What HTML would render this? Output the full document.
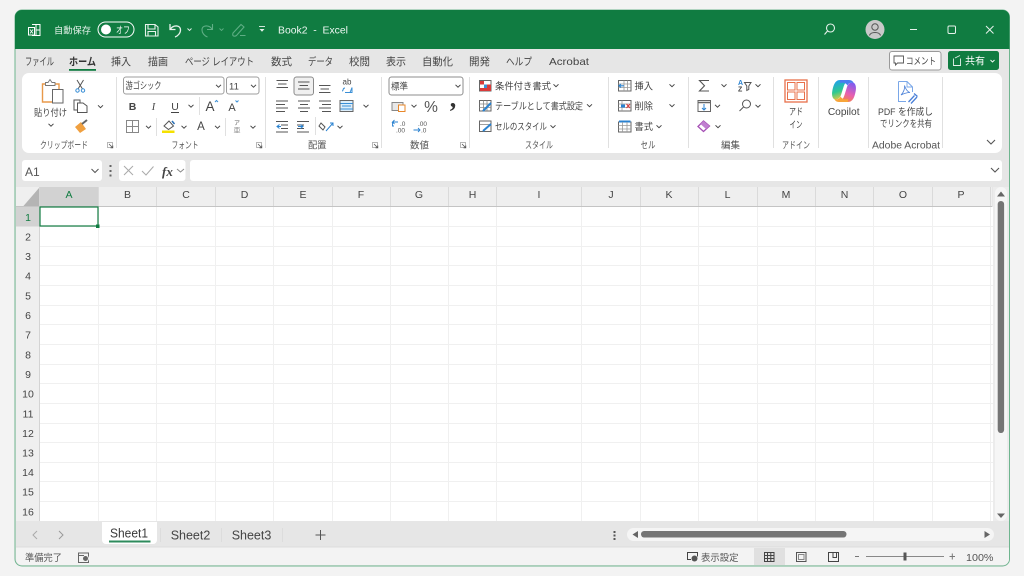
<!DOCTYPE html>
<html lang="ja"><head><meta charset="utf-8"><title>Book2 - Excel</title>
<style>
html,body{margin:0;padding:0;width:1024px;height:576px;overflow:hidden;background:#f3f3f3}
svg{display:block;position:absolute;left:0;top:0;filter:blur(.3px)}
text{font-family:"Liberation Sans","Noto Sans CJK JP",sans-serif;fill:#444;font-size:10px;white-space:pre}
.h{font-size:10.5px;fill:#444;text-anchor:middle}
.g{font-size:9.5px;fill:#555;text-anchor:middle}
.w{fill:#fff}
.t{font-size:10.5px}
.r{font-size:9.5px}
</style></head><body>
<svg width="1024" height="576" viewBox="0 0 1024 576">
<defs>
<linearGradient id="c1" x1="0.3" y1="0" x2="0.6" y2="1"><stop offset="0" stop-color="#1f9fee"/><stop offset=".55" stop-color="#2fc98f"/><stop offset="1" stop-color="#f7c93a"/></linearGradient>
<linearGradient id="c2" x1="0.7" y1="0" x2="0.3" y2="1"><stop offset="0" stop-color="#7f5cf0"/><stop offset=".55" stop-color="#e85fb0"/><stop offset="1" stop-color="#f58a3c"/></linearGradient>
<path id="cv" d="M-2.5 -1.2L0 1.2L2.5 -1.2" fill="none" stroke="#444" stroke-width="1"/>
<g id="ln"><rect x="-2.500" y="-2.500" width="5" height="5" fill="none" stroke="#999" stroke-width=".7"/><path d="M-1 -1L2.500 2.500M2.800 .5V2.800H.5" fill="none" stroke="#555" stroke-width=".8"/></g>
</defs>

<!-- window -->
<rect x="15" y="10" width="994.500" height="556" rx="7" fill="#e6e6e6" stroke="#6fb58f" stroke-width="1"/>
<path d="M15 49V17a7 7 0 0 1 7-7H1002.500a7 7 0 0 1 7 7V49Z" fill="#107c41"/>

<!-- title bar -->
<g fill="none" stroke="#fff" stroke-width="1">
<path d="M32 24.500H40V35.500H32M36 24.500V35.500M36 30H40" />
<rect x="28.500" y="27.500" width="6" height="7.500" fill="#107c41"/>
</g>
<path d="M30 29.500L33 33.500M33 29.500L30 33.500" stroke="#fff" stroke-width=".8"/>
<text x="54" y="33.500" style="font-size:9.300px;fill:#e6f2eb" textLength="37" lengthAdjust="spacingAndGlyphs">自動保存</text>
<rect x="98" y="22" width="36" height="15" rx="7.500" fill="none" stroke="#fff" stroke-width="1"/>
<circle cx="106" cy="29.500" r="5" fill="#fff"/>
<text x="116" y="33.500" style="font-size:9.500px;fill:#fff" textLength="14" lengthAdjust="spacingAndGlyphs">オフ</text>
<g fill="none" stroke="#e6f2eb" stroke-width="1.100">
<path d="M145.500 24.500H155L158 27V36H145.500ZM148 24.500V29H155V24.500M148 36V31.500H155.500V36"/>
<path d="M170 24V29.500H175.500M170.500 29C173 25 180.500 24.500 180.500 30C180.500 33 178 36 175 37" stroke-width="1.300"/>
<path d="M187.500 28.500L189.500 30.500L191.500 28.500" stroke-width=".9"/>
</g>
<g fill="none" stroke="#5fae85" stroke-width="1.100">
<path d="M212.500 24V29.500H207M212 29C209.500 25 202 24.500 202 30C202 33 204.500 36 207.500 37"/>
<path d="M219.500 28.500L221.500 30.500L223.500 28.500" stroke-width=".9"/>
<path d="M233 33L241 24.500L244 27L236.500 35.500C234 37 232 36 233 33ZM240 35.500H245.500"/>
</g>
<path d="M259 26.500H265" stroke="#e6f2eb" stroke-width=".9"/>
<path d="M259.500 29H264.500L262 31.800Z" fill="#e6f2eb"/>
<text x="278" y="33.700" style="font-size:10.500px;fill:#eef7f2" textLength="70" lengthAdjust="spacingAndGlyphs">Book2  -  Excel</text>

<g fill="none" stroke="#e6f2eb" stroke-width="1.100">
<circle cx="830.500" cy="28" r="4"/><path d="M827.500 31L824.500 34.500"/>
</g>
<circle cx="875" cy="29.500" r="9.500" fill="#c9c9c9"/>
<circle cx="875" cy="27" r="3.200" fill="none" stroke="#555" stroke-width="1"/>
<path d="M869.500 35.500C870.500 31.500 879.500 31.500 880.500 35.500" fill="none" stroke="#555" stroke-width="1"/>
<path d="M910 29.500H917" stroke="#e6f2eb" stroke-width="1"/>
<rect x="948" y="26" width="7.500" height="7.500" rx="1.200" fill="none" stroke="#e6f2eb" stroke-width="1"/>
<path d="M986 26L993.500 33.500M993.500 26L986 33.500" stroke="#e6f2eb" stroke-width="1"/>

<!-- tabs -->
<text class="t" x="25" y="65" textLength="29" lengthAdjust="spacingAndGlyphs">ファイル</text>
<text class="t" x="69" y="65" textLength="27" lengthAdjust="spacingAndGlyphs" style="font-weight:700;fill:#333">ホーム</text>
<text class="t" x="111" y="65" textLength="20" lengthAdjust="spacingAndGlyphs">挿入</text>
<text class="t" x="148" y="65" textLength="20" lengthAdjust="spacingAndGlyphs">描画</text>
<text class="t" x="185" y="65" textLength="69" lengthAdjust="spacingAndGlyphs">ページ レイアウト</text>
<text class="t" x="271" y="65" textLength="21" lengthAdjust="spacingAndGlyphs">数式</text>
<text class="t" x="308" y="65" textLength="25" lengthAdjust="spacingAndGlyphs">データ</text>
<text class="t" x="349" y="65" textLength="21" lengthAdjust="spacingAndGlyphs">校閲</text>
<text class="t" x="386" y="65" textLength="20" lengthAdjust="spacingAndGlyphs">表示</text>
<text class="t" x="422" y="65" textLength="31" lengthAdjust="spacingAndGlyphs">自動化</text>
<text class="t" x="469" y="65" textLength="21" lengthAdjust="spacingAndGlyphs">開発</text>
<text class="t" x="506" y="65" textLength="26" lengthAdjust="spacingAndGlyphs">ヘルプ</text>
<text class="t" x="549" y="65" textLength="40" lengthAdjust="spacingAndGlyphs">Acrobat</text>
<rect x="69" y="69" width="27" height="1.800" fill="#107c41"/>
<rect x="889.500" y="51.500" width="51.500" height="18.500" rx="2.500" fill="#fff" stroke="#9a9a9a"/>
<path d="M894 56H903.500V63H897.500L895.500 65V63H894Z" fill="none" stroke="#555" stroke-width=".9"/>
<text x="906" y="64.500" textLength="30" lengthAdjust="spacingAndGlyphs" style="font-size:9.800px">コメント</text>
<rect x="948" y="51" width="51" height="19" rx="2.500" fill="#107c41"/>
<path d="M953.500 58.500V65.500H960.500V58.500M955 58L960 55.500" fill="none" stroke="#e6f2eb" stroke-width=".9"/>
<text x="965" y="64.500" style="font-size:10px;fill:#fff">共有</text>
<path d="M990.500 60L992.500 62L994.500 60" fill="none" stroke="#fff" stroke-width=".9"/>

<!-- ribbon -->
<rect x="22" y="73" width="980" height="80" rx="7" fill="#fff"/>
<g stroke="#e0e0e0" stroke-width="1">
<path d="M116.500 77V148M265.500 77V148M381.500 77V148M469.500 77V148M608.500 77V148M688.500 77V148M773.500 77V148M818.500 77V148M868.500 77V148M942.500 77V148"/>
<path d="M199.500 97V115M156.500 118V136M225.500 118V136M315.500 117V135"/>
</g>
<text x="64" y="148.500" class="g" textLength="48" lengthAdjust="spacingAndGlyphs">クリップボード</text>
<text x="185" y="148.500" class="g" textLength="27" lengthAdjust="spacingAndGlyphs">フォント</text>
<text x="317.300" y="148.500" class="g" textLength="18.500" lengthAdjust="spacingAndGlyphs">配置</text>
<text x="419.500" y="148.500" class="g" textLength="19" lengthAdjust="spacingAndGlyphs">数値</text>
<text x="539" y="148.500" class="g" textLength="28" lengthAdjust="spacingAndGlyphs">スタイル</text>
<text x="648" y="148.500" class="g" textLength="15" lengthAdjust="spacingAndGlyphs">セル</text>
<text x="730.500" y="148.500" class="g" textLength="19" lengthAdjust="spacingAndGlyphs">編集</text>
<text x="796" y="148.500" class="g" textLength="28" lengthAdjust="spacingAndGlyphs">アドイン</text>
<text x="906" y="148.500" class="g" textLength="68" lengthAdjust="spacingAndGlyphs" style="font-size:10px">Adobe Acrobat</text>
<use href="#ln" x="110" y="145"/><use href="#ln" x="259" y="145"/><use href="#ln" x="375" y="145"/><use href="#ln" x="463" y="145"/>

<!-- clipboard -->
<path d="M45.500 84H42.500V102H52M55 84H59V89" fill="none" stroke="#e8994a" stroke-width="1.400"/>
<path d="M45.500 85V82.500H48L50 79.500L52 82.500H55V85.500H45.500Z" fill="#fff" stroke="#777" stroke-width=".9"/>
<rect x="52.500" y="89.500" width="10.500" height="13.500" fill="#fff" stroke="#666"/>
<text x="50.500" y="116" style="font-size:9.500px;text-anchor:middle" textLength="33" lengthAdjust="spacingAndGlyphs">貼り付け</text>
<use href="#cv" x="51" y="125"/>
<path d="M77 80L82.500 89M83.500 80L78 89" stroke="#555" stroke-width="1"/>
<circle cx="77.500" cy="90.500" r="1.700" fill="none" stroke="#3a8fd6"/><circle cx="83" cy="90.500" r="1.700" fill="none" stroke="#3a8fd6"/>
<path d="M77.500 110H74V100H80V103M77.500 103H83L87 106V112.500H77.500Z" fill="none" stroke="#555"/>
<use href="#cv" x="100.500" y="106.500"/>
<path d="M75 127L81 122L86 129L80 133Z" fill="#f0a040"/><path d="M82 124L87 120" stroke="#666" stroke-width="2"/>

<!-- font -->
<rect x="123.500" y="77" width="100.500" height="17" rx="2.500" fill="#fff" stroke="#9c9c9c"/>
<text x="125.500" y="89" style="font-size:9.500px" textLength="36" lengthAdjust="spacingAndGlyphs">游ゴシック</text>
<use href="#cv" x="218.500" y="86"/>
<rect x="226.500" y="77" width="32.500" height="17" rx="2.500" fill="#fff" stroke="#9c9c9c"/>
<text x="229" y="89.500" style="font-size:9.500px">11</text>
<use href="#cv" x="253.500" y="86"/>
<text x="132.500" y="110" style="font-size:10.500px;font-weight:700;text-anchor:middle">B</text>
<text x="153.500" y="110" style="font-size:10.500px;font-style:italic;font-family:'Liberation Serif',serif;text-anchor:middle">I</text>
<text x="175" y="110" style="font-size:10.500px;text-anchor:middle">U</text><path d="M171 112.500H179" stroke="#444"/>
<use href="#cv" x="191" y="106"/>
<text x="210" y="111" style="font-size:13.500px;text-anchor:middle">A</text><path d="M215 102L216.500 100.500L218 102" fill="none" stroke="#3a8fd6"/>
<text x="232" y="111" style="font-size:11px;text-anchor:middle">A</text><path d="M235.500 100.500L237 102L238.500 100.500" fill="none" stroke="#3a8fd6"/>
<g fill="none" stroke="#888"><rect x="126.500" y="120.500" width="12" height="12"/><path d="M132.500 120.500V132.500M126.500 126.500H138.500"/></g>
<use href="#cv" x="148.500" y="127"/>
<path d="M164 126L169 121L173.500 126L168.500 129.500Z" fill="none" stroke="#555"/><path d="M172 121L174.500 124" stroke="#2a6fb5" stroke-width="1.500"/>
<rect x="162" y="130.500" width="12.500" height="2.500" fill="#f5e100"/>
<use href="#cv" x="184" y="127"/>
<text x="201" y="130" style="font-size:11.500px;text-anchor:middle">A</text>
<use href="#cv" x="217.500" y="127"/>
<text x="237" y="125" style="font-size:6px;text-anchor:middle;fill:#666">ア</text><text x="237" y="132.500" style="font-size:7px;text-anchor:middle;fill:#999">亜</text>
<use href="#cv" x="253" y="127"/>

<!-- alignment -->
<rect x="294" y="77" width="19.500" height="18" rx="2.500" fill="#f0f0f0" stroke="#8a8a8a"/>
<g stroke="#555" stroke-width="1" fill="none">
<path d="M276.500 80.500H288M278 84H286.500M276.500 87.500H288"/>
<path d="M298 82H309.500M299.500 85.500H308M298 89H309.500"/>
<path d="M319 85.500H330.500M320.500 89H329M319 92.500H330.500"/>
<path d="M276 101H288M276 104.500H285M276 108H288M276 111.500H285"/>
<path d="M298 101H310M300 104.500H308M298 108H310M300 111.500H308"/>
<path d="M319 101H331M322 104.500H331M319 108H331M322 111.500H331"/>
<path d="M276 121.500H288M281 125H288M281 128.500H288M276 132H288"/>
<path d="M297 121.500H309M297 125H304M297 128.500H304M297 132H309"/>
</g>
<text x="347" y="84.500" style="font-size:8px;text-anchor:middle">ab</text>
<path d="M342 91C344 91 342 88 345 88M345 92.500H352V87.500L350 92.500" fill="none" stroke="#3a8fd6" stroke-width="1"/>
<rect x="340" y="100.500" width="13" height="11" fill="#dceefb" stroke="#666"/><path d="M342 106H351M340.500 103.500H353M340.500 109H353" stroke="#3a8fd6" stroke-width=".9"/>
<use href="#cv" x="366" y="106"/>
<path d="M277 126.500H281M279.500 124.500L277 126.500L279.500 128.500" fill="none" stroke="#2a82d0"/>
<path d="M298 126.500H302.500M300.500 124.500L303 126.500L300.500 128.500" fill="none" stroke="#2a82d0"/>
<path d="M321 123L325 127L323 130L319 126Z" fill="none" stroke="#555"/><path d="M326 131L333 123M330 123H333V126" fill="none" stroke="#2a82d0"/>
<use href="#cv" x="340" y="127"/>

<!-- number -->
<rect x="389" y="77" width="74" height="18" rx="2.500" fill="#fff" stroke="#8c8c8c"/>
<text x="391" y="89.500" style="font-size:9.300px" textLength="17" lengthAdjust="spacingAndGlyphs">標準</text>
<use href="#cv" x="458" y="86"/>
<rect x="392" y="102.500" width="11" height="8" fill="#e8e8e8" stroke="#888"/>
<rect x="398.500" y="105" width="6.500" height="6.500" fill="#fff" stroke="#e8872a"/>
<use href="#cv" x="414" y="106"/>
<text x="431" y="112" style="font-size:15.500px;text-anchor:middle;fill:#555">%</text>
<text x="453" y="107" style="font-size:26px;font-weight:700;text-anchor:middle;font-family:'Liberation Serif',serif;fill:#333">,</text>
<text x="400" y="126" style="font-size:6.500px;fill:#555">.0</text><text x="396" y="132.500" style="font-size:6.500px;fill:#555">.00</text>
<path d="M398 122H392.500L394.500 120M392.500 122L394.500 124M392.500 122V126H394" fill="none" stroke="#2a82d0" stroke-width=".9"/>
<text x="418" y="126" style="font-size:6.500px;fill:#555">.00</text><text x="421" y="132.500" style="font-size:6.500px;fill:#555">.0</text>
<path d="M413.500 130H420M418 128L420 130L418 132" fill="none" stroke="#2a82d0" stroke-width=".9"/>

<!-- styles -->
<rect x="479.500" y="80.500" width="11.500" height="10.500" fill="#fff" stroke="#666"/><rect x="480" y="81" width="4" height="3.500" fill="#d83b3b"/><rect x="487" y="84.500" width="4" height="3.500" fill="#d83b3b"/><rect x="480" y="88" width="11" height="3" fill="#d83b3b"/><rect x="484" y="84.500" width="3" height="3.500" fill="#3a8fd6"/>
<text class="r" x="495" y="89.500" textLength="56" lengthAdjust="spacingAndGlyphs">条件付き書式</text><use href="#cv" x="556" y="85.500"/>
<rect x="479.500" y="100.500" width="11.500" height="10.500" fill="#fff" stroke="#666"/><path d="M479.500 104H491M483.500 100.500V111M487 100.500V111M479.500 107.500H491" stroke="#888" stroke-width=".8"/><path d="M483 111L491 103" stroke="#2a82d0" stroke-width="2"/>
<text class="r" x="495" y="109.500" textLength="88" lengthAdjust="spacingAndGlyphs">テーブルとして書式設定</text><use href="#cv" x="589.500" y="105.500"/>
<rect x="479.500" y="121" width="11.500" height="10.500" fill="#fff" stroke="#666"/><path d="M480 124.500H490.500" stroke="#888" stroke-width=".8"/><path d="M483 131L491 124" stroke="#2a82d0" stroke-width="2"/>
<text class="r" x="495" y="130" textLength="52" lengthAdjust="spacingAndGlyphs">セルのスタイル</text><use href="#cv" x="553" y="126.500"/>

<!-- cells -->
<rect x="618.500" y="80.500" width="12.500" height="10.500" fill="#fff" stroke="#666"/><path d="M618.500 84H631M618.500 87.500H631M624 80.500V91M627.500 80.500V91" stroke="#999" stroke-width=".8"/><path d="M619 85.800H624M621 84L619 85.800L621 87.500" fill="none" stroke="#2a82d0" stroke-width="1.100"/>
<text class="r" x="634.500" y="89.500" textLength="18.500" lengthAdjust="spacingAndGlyphs">挿入</text><use href="#cv" x="672" y="85.500"/>
<rect x="618.500" y="100.500" width="12.500" height="10.500" fill="#fff" stroke="#666"/><path d="M618.500 104H631M618.500 107.500H631M622 100.500V111" stroke="#999" stroke-width=".8"/><rect x="621" y="104.500" width="4" height="3" fill="#2a82d0"/><path d="M626.500 104L630 108M630 104L626.500 108" stroke="#d83b3b"/>
<text class="r" x="634.500" y="109.500" textLength="18.500" lengthAdjust="spacingAndGlyphs">削除</text><use href="#cv" x="672" y="105.500"/>
<rect x="618.500" y="122" width="12.500" height="10" fill="#fff" stroke="#666"/><rect x="619" y="120.500" width="11.500" height="2" fill="#2a82d0"/><path d="M618.500 125.500H631M618.500 129H631M622.500 122V132M627 122V132" stroke="#999" stroke-width=".8"/>
<text class="r" x="634.500" y="130" textLength="18.500" lengthAdjust="spacingAndGlyphs">書式</text><use href="#cv" x="659" y="126.500"/>

<!-- editing -->
<path d="M709 80.500H699.500L704.500 85.800L699.500 91H709" fill="none" stroke="#555" stroke-width="1.100"/>
<use href="#cv" x="724" y="85.500"/>
<text x="738" y="85" style="font-size:7px;font-weight:700;fill:#2a82d0">A</text><text x="738" y="91.500" style="font-size:7px;font-weight:700">Z</text>
<path d="M744.500 82.500H751L748.800 86V89.500L746.800 90.500V86Z" fill="none" stroke="#555"/>
<use href="#cv" x="758" y="85.500"/>
<rect x="698" y="100.500" width="12.500" height="11" fill="#fff" stroke="#666"/><path d="M698 102.500H710.500" stroke="#666" stroke-width="1.500"/><path d="M704 104V110M702 108L704 110L706 108" fill="none" stroke="#2a82d0"/>
<use href="#cv" x="717.500" y="106"/>
<circle cx="746.500" cy="104" r="4" fill="none" stroke="#555"/><path d="M743.500 107L739.500 111" stroke="#555"/>
<use href="#cv" x="758" y="106"/>
<path d="M698 126.500L703.500 121L709.500 126L703.500 131.500Z" fill="#fff" stroke="#a54fb5" stroke-width="1.300"/><path d="M703.500 121L709.500 126L706 129L700.500 124Z" fill="#c07fd0"/>
<use href="#cv" x="718" y="126.500"/>

<!-- add-ins -->
<rect x="785" y="80" width="22" height="22" fill="#fff" stroke="#e8704a" stroke-width="1.300"/>
<g fill="#fff" stroke="#e8704a" stroke-width="1"><rect x="787.500" y="82.500" width="7.500" height="7.500"/><rect x="797" y="82.500" width="7.500" height="7.500"/><rect x="787.500" y="92" width="7.500" height="7.500"/><rect x="797" y="92" width="7.500" height="7.500"/></g>
<text x="796" y="115" style="font-size:9.500px;text-anchor:middle" textLength="14" lengthAdjust="spacingAndGlyphs">アド</text>
<text x="796" y="128" style="font-size:9.500px;text-anchor:middle" textLength="13" lengthAdjust="spacingAndGlyphs">イン</text>

<!-- copilot -->
<path d="M840 80H849C846 81 844.500 84 843.500 87L841 95C840 98 838 99.500 835.500 99.500C832.500 99.500 831.500 95 832.300 91C833.300 85.500 835 80 840 80Z" fill="url(#c1)"/>
<path d="M848 102H839C842 101 843.500 98 844.500 95L847 87C848 84 850 82.500 852.500 82.500C855.500 82.500 856.500 87 855.700 91C854.700 96.500 853 102 848 102Z" fill="url(#c2)"/>
<path d="M840 80H849C851.500 80 853 81.500 853.800 83C851 82 848.500 83 847.500 85.500C846 83 843 82 840 83Z" fill="#4a7cf0"/>
<path d="M848 102H839C836.500 102 835 100.500 834.300 99C837 100 839.500 99 840.500 96.500C842 99 845 100 848 99Z" fill="#f7a53a"/>
<text x="843.700" y="115" style="font-size:10.200px;text-anchor:middle">Copilot</text>

<!-- adobe -->
<path d="M898.500 81.500H907L912.500 87V92M898.500 81.500V101.500H906" fill="none" stroke="#7aa7e8" stroke-width="1"/>
<path d="M907 81.500V87H912.500" fill="none" stroke="#7aa7e8" stroke-width=".9"/>
<path d="M901 95C904 92 905 88 904.500 85.500C906 90 908 92 910 92.500C906.500 92.500 904 93.500 901 95Z" fill="none" stroke="#4a80d8" stroke-width=".8"/>
<path d="M908.500 102L914.500 95.500M911 103.500L917 97M914 93.500L917.500 96.500" fill="none" stroke="#4a80d8" stroke-width="1.300"/>
<text x="905.500" y="115" style="font-size:9.500px;text-anchor:middle" textLength="55" lengthAdjust="spacingAndGlyphs">PDF を作成し</text>
<text x="906" y="127" style="font-size:9.500px;text-anchor:middle" textLength="52" lengthAdjust="spacingAndGlyphs">でリンクを共有</text>
<path d="M987 140L991 144L995 140" fill="none" stroke="#555" stroke-width="1.100"/>

<!-- formula bar -->
<rect x="22" y="160" width="80" height="21" rx="3" fill="#fff"/>
<text x="25" y="176" style="font-size:12px;fill:#555">A1</text>
<path d="M91.500 169L95 172.500L98.500 169" fill="none" stroke="#555" stroke-width="1"/>
<g fill="#666"><rect x="109.500" y="165" width="2" height="2"/><rect x="109.500" y="170" width="2" height="2"/><rect x="109.500" y="174.500" width="2" height="2"/></g>
<rect x="119" y="160" width="66.500" height="21" rx="3" fill="#fff"/>
<path d="M124 166L133 175M133 166L124 175" stroke="#aaa" stroke-width="1"/>
<path d="M142 171L146 175L153.500 166.500" fill="none" stroke="#aaa" stroke-width="1"/>
<text x="162" y="176" style="font-family:'Liberation Serif',serif;font-size:13px;font-style:italic;font-weight:700;fill:#444">fx</text>
<path d="M177 169L180.500 172L184 169" fill="none" stroke="#888" stroke-width="1"/>
<rect x="190" y="160" width="812" height="21" rx="3" fill="#fff"/>
<path d="M991 168L995 172L999 168" fill="none" stroke="#555" stroke-width="1.100"/>

<!-- headers -->
<rect x="16" y="187" width="976" height="20" fill="#efefef"/>
<path d="M39 188V206.500H23Z" fill="#b4b4b4"/>
<rect x="40" y="187" width="58.500" height="20" fill="#d2d2d2"/>
<rect x="16" y="207" width="23.500" height="314" fill="#efefef"/>
<rect x="16" y="207" width="23.500" height="19.500" fill="#d2d2d2"/>
<rect x="40" y="207" width="953" height="314" fill="#fff"/>
<path d="M16 206.500H992" stroke="#c4c4c4" stroke-width="1"/>
<path d="M39.500 187V521" stroke="#d4d4d4" stroke-width="1"/>

<!-- grid -->
<g stroke="#f0f0f0" stroke-width="1">
<path d="M98.500 207V521M156.500 207V521M215.500 207V521M273.500 207V521M332.500 207V521M390.500 207V521M448.500 207V521M496.500 207V521M581.500 207V521M640.500 207V521M698.500 207V521M757.500 207V521M815.500 207V521M873.500 207V521M932.500 207V521M990.500 207V521"/>
<path d="M40 226.500H993M40 246.500H993M40 265.500H993M40 285.500H993M40 305.500H993M40 324.500H993M40 344.500H993M40 364.500H993M40 383.500H993M40 403.500H993M40 423.500H993M40 442.500H993M40 462.500H993M40 481.500H993M40 501.500H993"/>
</g>
<g stroke="#dadada" stroke-width="1">
<path d="M98.500 187V206M156.500 187V206M215.500 187V206M273.500 187V206M332.500 187V206M390.500 187V206M448.500 187V206M496.500 187V206M581.500 187V206M640.500 187V206M698.500 187V206M757.500 187V206M815.500 187V206M873.500 187V206M932.500 187V206M990.500 187V206"/>
</g>
<text x="69" y="198" class="h" style="fill:#107c41">A</text>
<text x="127.500" y="198" class="h">B</text><text x="186" y="198" class="h">C</text><text x="244.500" y="198" class="h">D</text><text x="303" y="198" class="h">E</text><text x="361" y="198" class="h">F</text><text x="419" y="198" class="h">G</text><text x="472.500" y="198" class="h">H</text><text x="539" y="198" class="h">I</text><text x="611" y="198" class="h">J</text><text x="669" y="198" class="h">K</text><text x="727.500" y="198" class="h">L</text><text x="786" y="198" class="h">M</text><text x="844.500" y="198" class="h">N</text><text x="903" y="198" class="h">O</text><text x="961" y="198" class="h">P</text>
<text x="28" y="221" class="h" style="fill:#107c41">1</text>
<text x="28" y="240.500" class="h">2</text><text x="28" y="260" class="h">3</text><text x="28" y="279.500" class="h">4</text><text x="28" y="299.500" class="h">5</text><text x="28" y="319" class="h">6</text><text x="28" y="338.500" class="h">7</text><text x="28" y="358.500" class="h">8</text><text x="28" y="378" class="h">9</text><text x="28" y="397.500" class="h">10</text><text x="28" y="417.500" class="h">11</text><text x="28" y="437" class="h">12</text><text x="28" y="456.500" class="h">13</text><text x="28" y="476" class="h">14</text><text x="28" y="495.500" class="h">15</text><text x="28" y="515.500" class="h">16</text>
<rect x="40" y="207" width="58" height="19" fill="none" stroke="#107c41" stroke-width="1.200"/>
<rect x="96" y="224.500" width="3.500" height="3.500" fill="#107c41"/>

<!-- v scrollbar -->
<rect x="993" y="187" width="16" height="334" fill="#ececec"/>
<rect x="995" y="187" width="12" height="334" rx="6" fill="#f6f6f6"/>
<path d="M997 196.500L1001 191.500L1005 196.500Z" fill="#666"/>
<rect x="997.700" y="201" width="6.400" height="232" rx="3.200" fill="#757575"/>
<path d="M997 513.500H1005L1001 518Z" fill="#666"/>

<!-- sheet tabs -->
<rect x="16" y="522" width="993" height="25" fill="#e6e6e6"/>
<path d="M37 531L33 535L37 539" fill="none" stroke="#aaa" stroke-width="1"/>
<path d="M59 531L63 535L59 539" fill="none" stroke="#999" stroke-width="1"/>
<path d="M102 522H157V540a4 4 0 0 1-4 4H106a4 4 0 0 1-4-4Z" fill="#fff"/>
<text x="129" y="537.500" style="font-size:12.500px;text-anchor:middle;fill:#3a3a3a" textLength="38" lengthAdjust="spacingAndGlyphs">Sheet1</text>
<rect x="109" y="540.500" width="41.500" height="2" fill="#2e8b5c"/>
<text x="190.500" y="539.500" style="font-size:12.500px;text-anchor:middle">Sheet2</text>
<text x="251.500" y="539.500" style="font-size:12.500px;text-anchor:middle">Sheet3</text>
<path d="M160.500 528V542M221.500 528V542M282.500 528V542" stroke="#dcdcdc"/>
<path d="M320.500 530V540M315.500 535H325.500" stroke="#555" stroke-width="1"/>
<g fill="#555"><rect x="613.500" y="531" width="2" height="2"/><rect x="613.500" y="534.500" width="2" height="2"/><rect x="613.500" y="538" width="2" height="2"/></g>
<rect x="627" y="528" width="367" height="13" rx="6.500" fill="#f5f5f5"/>
<path d="M638 531V538L632.500 534.500Z" fill="#666"/>
<rect x="641" y="531" width="205.500" height="6.500" rx="3.200" fill="#757575"/>
<path d="M984.500 531V538L990 534.500Z" fill="#666"/>

<!-- status bar -->
<path d="M16 547H1009V559a6 6 0 0 1-6 6H22a6 6 0 0 1-6-6Z" fill="#f3f3f3"/>
<path d="M16 547H1009" stroke="#dcdcdc"/>
<text x="25" y="561" textLength="37" lengthAdjust="spacingAndGlyphs" style="font-size:9.500px;fill:#555">準備完了</text>
<rect x="78.500" y="553" width="10" height="9.500" fill="none" stroke="#666"/><circle cx="85.500" cy="558.500" r="3" fill="#666" stroke="#f3f3f3"/><path d="M79 555.500H84" stroke="#666"/>
<path d="M697.500 556.500V552.500H687.500V559.500H691" fill="none" stroke="#444"/><circle cx="694.500" cy="558.500" r="3" fill="#555"/>
<text x="701" y="561" textLength="37.500" lengthAdjust="spacingAndGlyphs" style="font-size:9.500px;fill:#555">表示設定</text>
<rect x="754" y="548" width="31" height="17" fill="#e0e0e0"/>
<g fill="none" stroke="#444" stroke-width="1">
<rect x="764.500" y="552.500" width="9.500" height="9"/><path d="M767.500 552.500V561.500M770.800 552.500V561.500M764.500 555.500H774M764.500 558.500H774"/>
<rect x="796.500" y="552.500" width="9.500" height="9" stroke="#555"/><rect x="798.500" y="554.500" width="5.500" height="5" stroke="#888"/>
<path d="M828.500 561.500V552.500H838.500V561.500ZM833 552.500V557.500H836.500V552.500" />
</g>
<path d="M855 556.500H859" stroke="#777"/>
<path d="M866 556.500H944" stroke="#888"/>
<rect x="903.500" y="552.500" width="3" height="8" fill="#555"/>
<path d="M949.500 556.500H955M952.300 553.500V559.500" stroke="#777"/>
<text x="966" y="561" textLength="27.500" lengthAdjust="spacingAndGlyphs" style="font-size:10.500px;fill:#555">100%</text>
</svg>
</body></html>
